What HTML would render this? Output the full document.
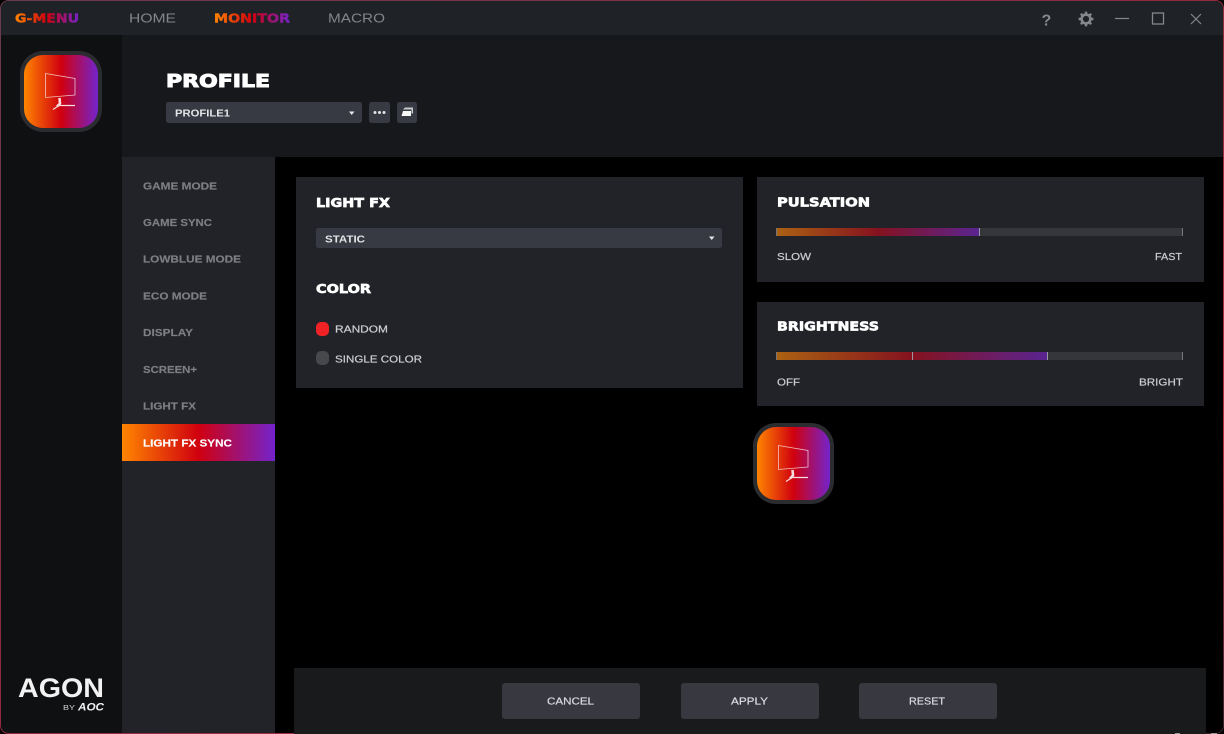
<!DOCTYPE html>
<html>
<head>
<meta charset="utf-8">
<style>
html,body{margin:0;padding:0;background:#000;width:1224px;height:734px;overflow:hidden}
svg{display:block}
text{font-family:"Liberation Sans",sans-serif}
.t{font-family:"DejaVu Sans",sans-serif;font-weight:700;font-size:12.5px;fill:#fff;stroke:#fff;stroke-width:.65px}
.m{font-weight:700;font-size:10.5px;fill:#7d7e82;stroke:#7d7e82;stroke-width:.15px}
.l{font-size:10.5px;fill:#cdced0;stroke:#cdced0;stroke-width:.2px}
.b{font-size:10.5px;fill:#dcdde0;stroke:#dcdde0;stroke-width:.2px}
.n{font-size:13px;fill:#85868a}
.s{font-weight:700;font-size:10.5px;fill:#e4e5e7}
</style>
</head>
<body>
<svg width="1224" height="734" viewBox="0 0 1224 734" xmlns="http://www.w3.org/2000/svg">
<defs>
<linearGradient id="g" x1="0" x2="1" y1="0" y2="0"><stop offset="0" stop-color="#ff8500"/><stop offset=".5" stop-color="#d0000f"/><stop offset="1" stop-color="#7423cc"/></linearGradient>
<linearGradient id="d" x1="0" x2="1" y1="0" y2="0"><stop offset="0" stop-color="#ab6212"/><stop offset=".5" stop-color="#85121f"/><stop offset="1" stop-color="#5a2490"/></linearGradient>
<linearGradient id="gm" gradientUnits="userSpaceOnUse" x1="15" x2="79" y1="0" y2="0"><stop offset="0" stop-color="#ff8500"/><stop offset=".5" stop-color="#d0000f"/><stop offset="1" stop-color="#7423cc"/></linearGradient>
<linearGradient id="mo" gradientUnits="userSpaceOnUse" x1="214" x2="290" y1="0" y2="0"><stop offset="0" stop-color="#ff8500"/><stop offset=".5" stop-color="#d0000f"/><stop offset="1" stop-color="#7423cc"/></linearGradient>
<linearGradient id="bd" x1="0" x2="1" y1="0" y2="1"><stop offset="0" stop-color="#6a3a50"/><stop offset=".45" stop-color="#8a2a40"/><stop offset=".8" stop-color="#b8303f"/><stop offset="1" stop-color="#3a2430"/></linearGradient>
</defs>

<rect width="1224" height="734" fill="#000"/>
<!-- title bar -->
<path d="M9 1H1215a8 8 0 0 1 8 8V35H1V9a8 8 0 0 1 8-8Z" fill="#1f2226"/>
<!-- left column -->
<path d="M1 35H122V733H9a8 8 0 0 1-8-8Z" fill="#0f1012"/>
<!-- header -->
<rect x="122" y="35" width="1102" height="122" fill="#17181b"/>
<!-- sidebar -->
<rect x="122" y="157" width="153" height="577" fill="#222328"/>
<rect x="122" y="424" width="153" height="37" fill="url(#g)"/>
<!-- window border -->
<rect x=".5" y=".5" width="1223" height="733" rx="8" fill="none" stroke="url(#bd)"/>

<!-- top nav -->
<text x="15" y="22.5" class="t" style="fill:url(#gm);stroke:url(#gm);stroke-width:.4px;font-size:12px" textLength="64" lengthAdjust="spacingAndGlyphs">G-MENU</text>
<text x="129" y="22.5" class="n" textLength="47" lengthAdjust="spacingAndGlyphs">HOME</text>
<text x="214" y="22.5" class="t" style="fill:url(#mo);stroke:url(#mo);stroke-width:.4px;font-size:12px" textLength="76" lengthAdjust="spacingAndGlyphs">MONITOR</text>
<text x="328" y="22.5" class="n" textLength="57" lengthAdjust="spacingAndGlyphs">MACRO</text>

<!-- window controls -->
<text x="1041.5" y="25.5" style="font-size:16px;font-weight:700;fill:#85888a">?</text>
<g transform="translate(1086 19)" fill="none" stroke="#85888a">
<circle r="4.4" stroke-width="2.6"/>
<path d="M0-7.4V-5M0 5V7.4M-7.4 0H-5M5 0H7.4M-5.2-5.2-3.6-3.6M3.6 3.6 5.2 5.2M-5.2 5.2-3.6 3.6M3.6-3.6 5.2-5.2" stroke-width="2.4"/>
</g>
<path d="M1115 18.5H1129" stroke="#85888a" stroke-width="1.2"/>
<rect x="1152.5" y="13" width="11" height="11" fill="none" stroke="#85888a" stroke-width="1.3"/>
<path d="M1191 14 1201 24M1201 14 1191 24" stroke="#85888a" stroke-width="1.2"/>

<!-- logo 1 -->
<rect x="20" y="51" width="82" height="81" rx="23" fill="#2b2c30"/>
<rect x="24" y="55" width="74" height="73" rx="19" fill="url(#g)"/>
<g fill="none" stroke="#f6dede">
<path d="M45.5 73.5 75 78.5V95L45.5 97.5Z" stroke-width=".8" stroke-opacity=".85"/>
<path d="M59.5 98 60 103.5 57 106.5" stroke-width="2.6"/>
<path d="M53 109.5 59 105.5H75" stroke-width="1.2"/>
</g>

<!-- profile -->
<text x="166" y="87" class="t" style="font-size:17.5px;stroke-width:.95px" textLength="104" lengthAdjust="spacingAndGlyphs">PROFILE</text>
<rect x="166" y="102" width="196" height="21" rx="2.5" fill="#383a43"/>
<text x="175" y="116.5" class="s" textLength="55" lengthAdjust="spacingAndGlyphs">PROFILE1</text>
<path d="M349 111.5H354.5L351.7 115Z" fill="#e4e5e7"/>
<rect x="369" y="102" width="21" height="21" rx="2.5" fill="#383a43"/>
<circle cx="375" cy="112.5" r="1.5" fill="#e4e5e7"/><circle cx="379.5" cy="112.5" r="1.5" fill="#e4e5e7"/><circle cx="384" cy="112.5" r="1.5" fill="#e4e5e7"/>
<rect x="397" y="102" width="20" height="21" rx="2.5" fill="#383a43"/>
<path d="M403 109.5 405 107.5H413V113.5H411.5V109.5Z" fill="#c8c9cc"/>
<path d="M401.5 116 403 111H411V116Z" fill="#f6f6f6"/>

<!-- menu -->
<text x="143" y="189.3" class="m" textLength="74" lengthAdjust="spacingAndGlyphs">GAME MODE</text>
<text x="143" y="226" class="m" textLength="69" lengthAdjust="spacingAndGlyphs">GAME SYNC</text>
<text x="143" y="262.3" class="m" textLength="98" lengthAdjust="spacingAndGlyphs">LOWBLUE MODE</text>
<text x="143" y="299.3" class="m" textLength="64" lengthAdjust="spacingAndGlyphs">ECO MODE</text>
<text x="143" y="336" class="m" textLength="50" lengthAdjust="spacingAndGlyphs">DISPLAY</text>
<text x="143" y="373" class="m" textLength="54" lengthAdjust="spacingAndGlyphs">SCREEN+</text>
<text x="143" y="409.3" class="m" textLength="53" lengthAdjust="spacingAndGlyphs">LIGHT FX</text>
<text x="143" y="446.3" class="m" style="fill:#fff;stroke:#fff" textLength="89" lengthAdjust="spacingAndGlyphs">LIGHT FX SYNC</text>

<!-- panel light fx -->
<rect x="296" y="177" width="447" height="211" fill="#222328"/>
<text x="316" y="207" class="t" textLength="74" lengthAdjust="spacingAndGlyphs">LIGHT FX</text>
<rect x="316" y="228" width="406" height="20" rx="2.5" fill="#383a43"/>
<text x="325" y="242.3" class="s" textLength="40" lengthAdjust="spacingAndGlyphs">STATIC</text>
<path d="M709 236.5H714.5L711.7 240Z" fill="#e4e5e7"/>
<text x="316" y="293" class="t" textLength="55" lengthAdjust="spacingAndGlyphs">COLOR</text>
<rect x="316" y="322" width="13" height="14" rx="5" fill="#f02226"/>
<text x="335" y="332.3" class="l" textLength="53" lengthAdjust="spacingAndGlyphs">RANDOM</text>
<rect x="316" y="351" width="13" height="14" rx="5" fill="#47484c"/>
<text x="335" y="362.3" class="l" textLength="87" lengthAdjust="spacingAndGlyphs">SINGLE COLOR</text>

<!-- panel pulsation -->
<rect x="757" y="177" width="447" height="105" fill="#222328"/>
<text x="777" y="206.7" class="t" textLength="93" lengthAdjust="spacingAndGlyphs">PULSATION</text>
<rect x="776" y="228" width="407" height="8" fill="#35363b"/>
<rect x="776" y="228" width="203" height="8" fill="url(#d)"/>
<rect x="776" y="228" width="1" height="8" fill="#77787c"/>
<rect x="979" y="228" width="1" height="8" fill="#9a9aa0"/>
<rect x="1182" y="228" width="1" height="8" fill="#77787c"/>
<text x="777" y="260" class="l" textLength="34" lengthAdjust="spacingAndGlyphs">SLOW</text>
<text x="1155" y="260" class="l" textLength="27" lengthAdjust="spacingAndGlyphs">FAST</text>

<!-- panel brightness -->
<rect x="757" y="302" width="447" height="104" fill="#222328"/>
<text x="777" y="330.7" class="t" textLength="102" lengthAdjust="spacingAndGlyphs">BRIGHTNESS</text>
<rect x="776" y="352" width="407" height="8" fill="#35363b"/>
<rect x="776" y="352" width="271" height="8" fill="url(#d)"/>
<rect x="776" y="352" width="1" height="8" fill="#77787c"/>
<rect x="912" y="352" width="1" height="8" fill="#9a9aa0"/>
<rect x="1047" y="352" width="1" height="8" fill="#9a9aa0"/>
<rect x="1182" y="352" width="1" height="8" fill="#77787c"/>
<text x="777" y="385.3" class="l" textLength="23" lengthAdjust="spacingAndGlyphs">OFF</text>
<text x="1139" y="385.3" class="l" textLength="44" lengthAdjust="spacingAndGlyphs">BRIGHT</text>

<!-- logo 2 -->
<rect x="753" y="423" width="81" height="81" rx="23" fill="#2b2c30"/>
<rect x="757" y="427" width="73" height="73" rx="19" fill="url(#g)"/>
<g fill="none" stroke="#f6dede">
<path d="M778.5 445.5 808 450.5V467L778.5 469.5Z" stroke-width=".8" stroke-opacity=".85"/>
<path d="M792.5 470 793 475.5 790 478.5" stroke-width="2.6"/>
<path d="M786 481.5 792 477.5H808" stroke-width="1.2"/>
</g>

<!-- bottom bar -->
<rect x="294" y="668" width="912" height="66" fill="#191a1c"/>
<rect x="502" y="683" width="138" height="36" rx="3" fill="#373840"/>
<rect x="681" y="683" width="138" height="36" rx="3" fill="#373840"/>
<rect x="859" y="683" width="138" height="36" rx="3" fill="#373840"/>
<text x="547" y="704.3" class="b" textLength="47" lengthAdjust="spacingAndGlyphs">CANCEL</text>
<text x="731" y="704.3" class="b" textLength="37" lengthAdjust="spacingAndGlyphs">APPLY</text>
<text x="909" y="704.3" class="b" textLength="36" lengthAdjust="spacingAndGlyphs">RESET</text>
<rect x="1175" y="733" width="5" height="1" fill="#9a9a9a"/>
<rect x="1211" y="733" width="6" height="1" fill="#9a9a9a"/>

<!-- AGON logo -->
<text x="18" y="696.8" style="font-size:27px;font-weight:700;fill:#f2f2f2" textLength="86" lengthAdjust="spacingAndGlyphs">AGON</text>
<text x="63" y="710" style="font-size:7.5px;fill:#d0d0d0" textLength="12" lengthAdjust="spacingAndGlyphs">BY</text>
<text x="78" y="710.3" style="font-size:11px;font-weight:700;font-style:italic;fill:#f2f2f2" textLength="26" lengthAdjust="spacingAndGlyphs">AOC</text>
</svg>
</body>
</html>
